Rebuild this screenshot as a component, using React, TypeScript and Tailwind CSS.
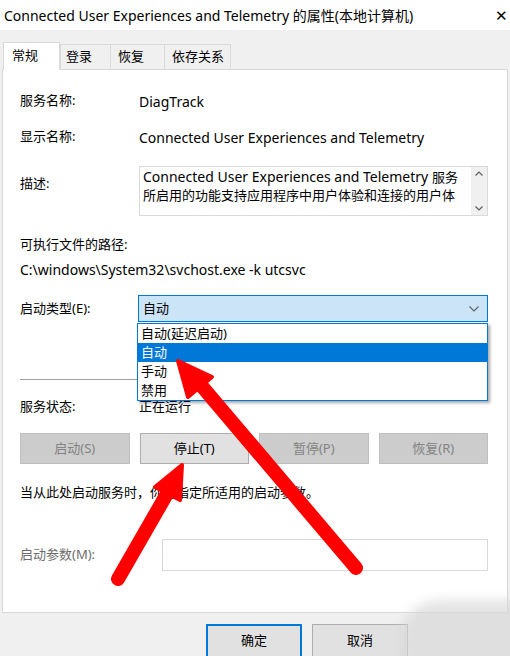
import React from 'react';

const font = "font-['Noto_Sans','Noto_Sans_CJK_SC',sans-serif]";

interface IPropButton {
  label: string;
  disabled?: boolean;
  className?: string;
}

const PropButton: React.FC<IPropButton> = ({ label, disabled, className }) => {
  return (
    <div
      className={`h-[31px] flex items-center justify-center border text-[13px] ${
        disabled ? 'bg-[#cccccc] border-[#bfbfbf] text-[#838383]' : 'bg-[#e1e1e1] border-[#adadad] text-black'
      } ${className ?? ''}`}
    >
      {label}
    </div>
  );
};

const Arrows: React.FC = () => {
  return (
    <svg className="absolute top-0 left-0 pointer-events-none" width="510" height="656" viewBox="0 0 510 656">
      <g stroke="#ff0000" strokeLinecap="round" fill="#ff0000" strokeLinejoin="round">
        {/* upper arrow, to the 自动 option */}
        <line x1="356" y1="568" x2="200" y2="384" strokeWidth="14" />
        <polygon points="178,361 212,377 188,397" strokeWidth="4" />
        {/* lower arrow, to the stop button */}
        <line x1="118" y1="579" x2="168" y2="492" strokeWidth="14" />
        <polygon points="182,465 155,487 180,500" strokeWidth="4" />
      </g>
    </svg>
  );
};

const App: React.FC = () => {
  const options = ['自动(延迟启动)', '自动', '手动', '禁用'];

  return (
    <div className={`relative w-[510px] h-[656px] overflow-hidden bg-[#f0f0f0] text-black ${font}`}>
      {/* title bar */}
      <div className="h-[30px] bg-white flex items-center justify-between pl-[4px] pr-[2px] text-[14px]">
        <span>Connected User Experiences and Telemetry 的属性(本地计算机)</span>
        <span className="text-[15px] leading-none">✕</span>
      </div>

      {/* tabs */}
      <div className="flex items-end h-[39px] px-[3px] text-[13px]">
        <div className="h-[28px] w-[57px] bg-white border border-b-0 border-[#d9d9d9] pl-[8px] pt-[3px] relative top-[1px] z-10">常规</div>
        <div className="h-[25px] w-[51px] border border-b-0 border-[#d9d9d9] pl-[5px] pt-[2px]">登录</div>
        <div className="h-[25px] w-[54px] border border-b-0 border-l-0 border-[#d9d9d9] pl-[7px] pt-[2px]">恢复</div>
        <div className="h-[25px] w-[66px] border border-b-0 border-l-0 border-[#d9d9d9] pl-[7px] pt-[2px]">依存关系</div>
      </div>

      {/* panel */}
      <div className="relative mx-[2px] h-[544px] bg-white border border-[#d9d9d9] pl-[17px] pr-[19px] text-[13px]">
        <div className="flex items-center h-[20px] mt-[21px]">
          <div className="w-[119px]">服务名称:</div>
          <div className="text-[14px]">DiagTrack</div>
        </div>
        <div className="flex items-center h-[20px] mt-[16px]">
          <div className="w-[119px]">显示名称:</div>
          <div className="text-[14px]">Connected User Experiences and Telemetry</div>
        </div>
        <div className="flex mt-[19px]">
          <div className="w-[119px] pt-[8px]">描述:</div>
          <div className="flex-1 h-[50px] border border-[#d9d9d9] flex">
            <div className="flex-1 pl-[3px] pt-[1px] leading-[18px] whitespace-nowrap">
              <span className="text-[14px]">Connected User Experiences and Telemetry </span>服务
              <br />
              所启用的功能支持应用程序中用户体验和连接的用户体
            </div>
            <div className="w-[16px] bg-[#f0f0f0] flex flex-col items-center justify-between py-[4px] text-[#606060]">
              <svg width="8" height="5" viewBox="0 0 8 5">
                <path d="M0.5 4.5 L4 1 L7.5 4.5" stroke="currentColor" fill="none" strokeWidth="1.2" />
              </svg>
              <svg width="8" height="5" viewBox="0 0 8 5">
                <path d="M0.5 0.5 L4 4 L7.5 0.5" stroke="currentColor" fill="none" strokeWidth="1.2" />
              </svg>
            </div>
          </div>
        </div>
        <div className="h-[20px] flex items-center mt-[19px]">可执行文件的路径:</div>
        <div className="h-[20px] flex items-center mt-[4px] text-[14px]">C:\windows\System32\svchost.exe -k utcsvc</div>
        <div className="flex items-center mt-[16px]">
          <div className="w-[118px]">启动类型(E):</div>
          <div className="flex-1 h-[27px] border border-[#0078d7] bg-[#cce4f7] flex items-center justify-between pl-[4px] pr-[8px]">
            <span>自动</span>
            <svg width="10" height="6" viewBox="0 0 10 6">
              <path d="M0.5 0.5 L5 5 L9.5 0.5" stroke="#606060" fill="none" strokeWidth="1.1" />
            </svg>
          </div>
        </div>
        <div className="w-[118px] h-px bg-[#a0a0a0] mt-[57px]" />
        <div className="flex items-center h-[20px] mt-[17px]">
          <div className="w-[119px]">服务状态:</div>
          <div>正在运行</div>
        </div>
        <div className="grid grid-cols-4 gap-x-[10px] mt-[16px]">
          <PropButton label="启动(S)" disabled />
          <PropButton label="停止(T)" />
          <PropButton label="暂停(P)" disabled />
          <PropButton label="恢复(R)" disabled />
        </div>
        <div className="h-[20px] flex items-center mt-[19px]">当从此处启动服务时，你可指定所适用的启动参数。</div>
        <div className="flex items-center mt-[36px]">
          <div className="w-[142px] text-[#6d6d6d]">启动参数(M):</div>
          <div className="flex-1 h-[32px] border border-[#d9d9d9]" />
        </div>

        {/* open dropdown list */}
        <div className="absolute left-[134px] top-[253px] w-[351px] bg-white border border-[#0078d7] shadow-[2px_2px_3px_rgba(0,0,0,0.35)]">
          {options.map((value, index) => (
            <div
              key={`opt-${index}`}
              className={`h-[19px] flex items-center pl-[3px] ${index === 1 ? 'bg-[#0078d7] text-white' : ''}`}
            >
              {value}
            </div>
          ))}
        </div>
      </div>

      {/* footer buttons */}
      <div className="flex gap-[10px] pl-[206px] mt-[11px] text-[13px]">
        <div className="w-[96px] h-[34px] bg-[#e1e1e1] border-2 border-[#0078d7] flex items-center justify-center">确定</div>
        <div className="w-[96px] h-[34px] bg-[#e1e1e1] border border-[#adadad] flex items-center justify-center">取消</div>
      </div>

      {/* blurred watermark corner */}
      <div className="absolute left-[400px] top-[600px] w-[140px] h-[80px] rounded-tl-[40px] bg-[#d8d8d8] opacity-70 blur-[6px]" />

      <Arrows />
    </div>
  );
};

export default App;
